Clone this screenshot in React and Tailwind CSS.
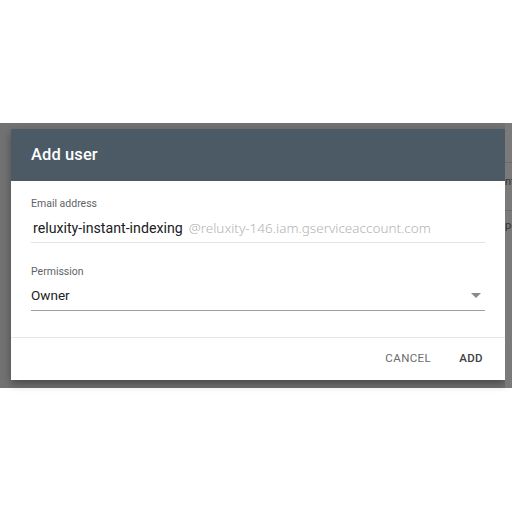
import React from 'react';

export default function App() {
  return (
    <div className="w-[512px] h-[512px] bg-white flex flex-col font-['Roboto',sans-serif]">
      <div className="h-[123px] shrink-0" />

      {/* backdrop */}
      <div className="h-[265px] shrink-0 bg-[#727272] flex pt-[6px]">
        <div className="w-[11px] shrink-0" />

        {/* dialog */}
        <div className="w-[494px] h-[251px] bg-white flex flex-col shadow-[0_4px_8px_rgba(0,0,0,0.35)] shrink-0">
          <div className="h-[52px] bg-[#4b5a64] flex items-center px-5">
            <h1 className="text-white text-[16.5px] font-medium tracking-[0.1px]">Add user</h1>
          </div>

          <div className="flex flex-col px-5 pt-[16px]">
            <label className="text-[10.5px] text-[#5f6368] leading-[14px]">Email address</label>
            <div className="flex items-baseline h-[32px] pt-[7px] border-b border-[#e3e3e3]">
              <span className="text-[14.2px] text-[#202124] ml-[2px]">reluxity-instant-indexing</span>
              <span className="text-[13.5px] text-[#b3b3b3] ml-[6px] font-light font-['Noto_Sans',sans-serif]">@reluxity-146.iam.gserviceaccount.com</span>
            </div>

            <label className="text-[10.5px] text-[#5f6368] leading-[14px] mt-[22px]">Permission</label>
            <div className="flex items-center justify-between h-[32px] border-b border-[#9e9e9e] pt-[2px]">
              <span className="text-[13.5px] text-[#202124]">Owner</span>
              <span className="w-0 h-0 border-l-[5px] border-r-[5px] border-t-[5px] border-l-transparent border-r-transparent border-t-[#8a8a8a] mr-[4px]" />
            </div>
          </div>

          <div className="mt-[26px] border-t border-[#e6e6e6] flex-1 flex items-center justify-end pr-[22px] gap-[28px]">
            <button className="text-[11.5px] text-[#6b6b6b] tracking-[0.4px]">CANCEL</button>
            <button className="text-[11.5px] font-medium text-[#3c4043] tracking-[0.4px]">ADD</button>
          </div>
        </div>

        {/* page content peeking behind the scrim */}
        <div className="flex-1 bg-[#7a7a7a] overflow-hidden flex flex-col text-[11px] text-[#333] leading-none -mt-[6px]">
          <div className="h-[40px] border-b border-[#6a6a6a]" />
          <div className="h-[24px] flex items-end">nt</div>
          <div className="h-[24px] border-b border-[#6a6a6a]" />
          <div className="h-[20px] flex items-end">pe</div>
        </div>
      </div>
    </div>
  );
}
